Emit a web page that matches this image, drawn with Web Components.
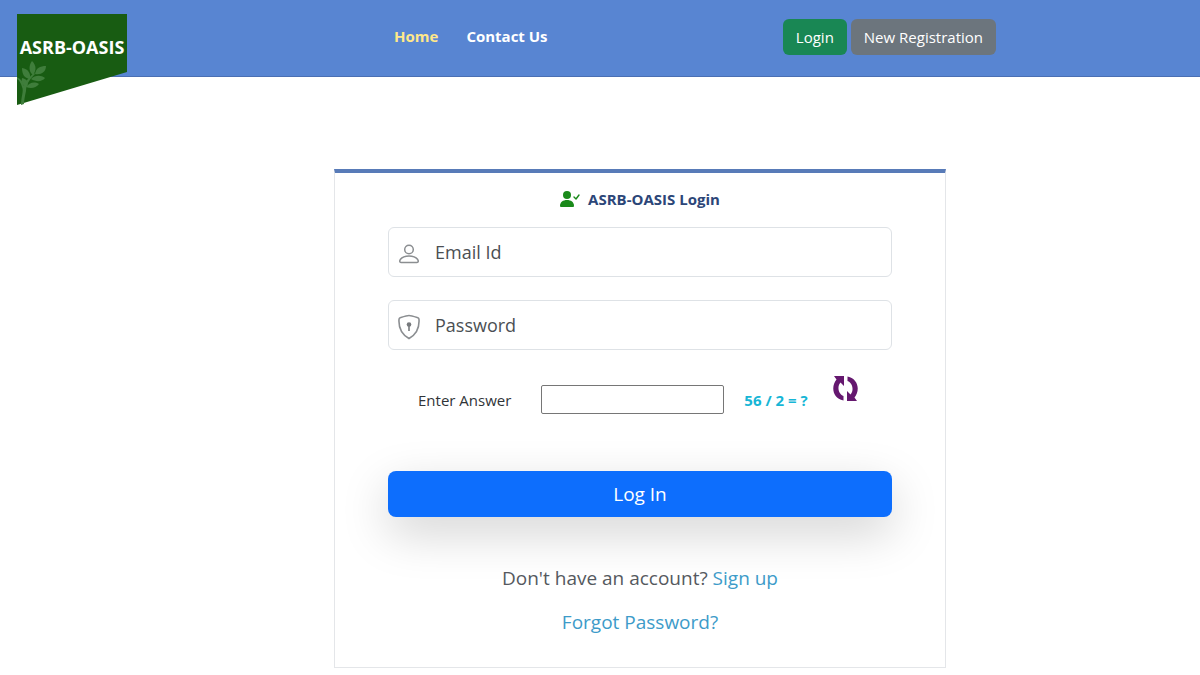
<!DOCTYPE html>
<html lang="en">
<head>
<meta charset="utf-8">
<meta name="viewport" content="width=device-width, initial-scale=1">
<title>ASRB-OASIS Login</title>
<style>
    body {
        margin: 0;
        background: #fff;
        color: #303438;
        font: 15px/24px "Open Sans", "Noto Sans", sans-serif;
    }
    site-header [slot="nav"] { color: #fff; font-weight: 700; text-decoration: none; }
    site-header [slot="nav"][aria-current] { color: #ffe88a; }
</style>
</head>
<body>
<site-header>
    <a slot="nav" href="#home" aria-current="page">Home</a>
    <a slot="nav" href="#contact">Contact Us</a>
    <action-button slot="actions" color="#198754">Login</action-button>
    <action-button slot="actions" color="#6c757d">New Registration</action-button>
</site-header>
<login-card heading="ASRB-OASIS Login"></login-card>

<script>
// logo banner hanging below the header
class SiteLogo extends HTMLElement {
    constructor() {
        super();
        this.attachShadow({ mode: 'open' });
        this.shadowRoot.innerHTML = `
            <style>
                :host { display: block; }
                a, svg { display: block; }
                text { font: 700 18px "Open Sans", "Noto Sans", sans-serif; }
            </style>
            <a href="#home" aria-label="ASRB-OASIS">
                <svg width="110" height="91" viewBox="0 0 110 91">
                    <path d="M0 0H110V58L0 91Z" fill="#185c12"/>
                    <g fill="#3f7d3b">
                        <path d="M4 91C4 82 7 77 5 73C4 69 2 66 0 65V63C4 65 6 68 7 72C8 68 12 63 17 59L18 60C12 66 9 71 9 77C8 82 7 86 7 90Z"/>
                        <path d="M15 47C20 52 19 57 16 61C11 57 12 51 15 47Z"/>
                        <path d="M29 52C29 58 24 61 18 60C19 54 23 52 29 52Z"/>
                        <path d="M5 54C11 55 14 59 13 65C7 64 5 60 5 54Z"/>
                        <path d="M28 64C25 68 19 68 14 65C18 61 24 61 28 64Z"/>
                        <path d="M5 64C10 65 12 68 10 73C6 72 4 69 5 64Z"/>
                        <path d="M22 70C19 74 14 75 9 73C12 69 17 67 22 70Z"/>
                    </g>
                    <text x="55" y="40" text-anchor="middle" fill="#fff">ASRB-OASIS</text>
                </svg>
            </a>
        `;
    }
}

class ActionButton extends HTMLElement {
    constructor() {
        super();
        this.attachShadow({ mode: 'open' });
    }

    connectedCallback() {
        this.shadowRoot.innerHTML = `
            <style>
                :host { display: block; }
                button {
                    display: block;
                    padding: 6px 13px;
                    border: 0;
                    border-radius: 6px;
                    background: ${this.getAttribute('color')};
                    color: #fff;
                    font: inherit;
                    cursor: pointer;
                }
            </style>
            <button type="button"><slot></slot></button>
        `;
    }
}

class SiteHeader extends HTMLElement {
    constructor() {
        super();
        this.attachShadow({ mode: 'open' });
        this.shadowRoot.innerHTML = `
            <style>
                :host { display: block; }
                header {
                    display: grid;
                    grid-template-columns: 35fr 36fr auto;
                    align-items: start;
                    padding: 14px 17% 21px 16px;
                    border-bottom: 1px solid #4a6fb3;
                    background: #5885d2;
                }
                site-logo { margin: 0 0 -64px 1px; }
                nav { display: flex; gap: 28px; padding-top: 10px; }
                .actions { display: flex; gap: 4px; padding-top: 5px; }
            </style>
            <header>
                <site-logo></site-logo>
                <nav aria-label="Main"><slot name="nav"></slot></nav>
                <div class="actions"><slot name="actions"></slot></div>
            </header>
        `;
    }
}

// text box with an icon at its left edge
class IconField extends HTMLElement {
    constructor() {
        super();
        this.attachShadow({ mode: 'open' });
    }

    connectedCallback() {
        const label = this.getAttribute('label');
        const type = this.getAttribute('type') || 'text';
        this.shadowRoot.innerHTML = `
            <style>
                :host { display: block; }
                label {
                    display: flex;
                    align-items: center;
                    gap: 14px;
                    height: 48px;
                    padding-left: 9px;
                    border: 1px solid #dee2e6;
                    border-radius: 6px;
                }
                ::slotted(svg) { flex: none; margin-top: 4px; }
                input {
                    flex: 1;
                    min-width: 0;
                    padding: 0;
                    border: 0;
                    outline: 0;
                    background: none;
                    color: #212529;
                    font: 18px/28px "Open Sans", "Noto Sans", sans-serif;
                }
                input::placeholder { color: #4b4f53; opacity: 1; }
            </style>
            <label><slot></slot><input type="${type}" placeholder="${label}" aria-label="${label}"></label>
        `;
    }
}

class CaptchaRow extends HTMLElement {
    constructor() {
        super();
        this.attachShadow({ mode: 'open' });
        this.shadowRoot.innerHTML = `
            <style>
                :host { display: flex; align-items: center; padding-left: 30px; }
                input {
                    box-sizing: border-box;
                    width: 183px;
                    height: 29px;
                    margin: 0 20px 0 30px;
                    border: 1px solid #767676;
                    border-radius: 2px;
                    font: inherit;
                }
                strong { color: #17b6d6; }
                button {
                    margin: 0 0 22px 25px;
                    padding: 0;
                    border: 0;
                    background: none;
                    cursor: pointer;
                }
                svg { display: block; }
            </style>
            <label for="answer">Enter Answer</label>
            <input id="answer" type="text">
            <strong>56 / 2 = ?</strong>
            <button type="button" aria-label="New question">
                <svg width="25" height="25" viewBox="0 0 25 25" fill="#65186f">
                    <path d="M1 0H11V10L7.500 6.500C4 10 5 18 10.500 20V24.500C-1 22-2 10 3.500 3.500Z"/>
                    <path d="M24 25H14V15L17.500 18.500C21 15 20 7 14.500 5V.5C26 3 27 15 21.500 21.500Z"/>
                </svg>
            </button>
        `;
    }
}

class LoginCard extends HTMLElement {
    constructor() {
        super();
        this.attachShadow({ mode: 'open' });
    }

    connectedCallback() {
        this.shadowRoot.innerHTML = `
            <style>
                :host { display: block; padding: 92px 0 8px 80px; }
                main {
                    box-sizing: border-box;
                    max-width: 612px;
                    margin: 0 auto;
                    padding: 14px 53px 30px;
                    border: 1px solid #e4e6e9;
                    border-top: 4px solid #587bb8;
                }
                h1 {
                    display: flex;
                    justify-content: center;
                    align-items: center;
                    gap: 8px;
                    margin: 0 0 16px;
                    color: #2c4678;
                    font-size: 15px;
                    line-height: 24px;
                }
                icon-field { margin-bottom: 23px; }
                captcha-row { padding-top: 3px; margin-bottom: 48px; }
                .submit {
                    display: block;
                    width: 100%;
                    padding: 8px;
                    border: 0;
                    border-radius: 8px;
                    background: #0d6efd;
                    box-shadow: 0 16px 48px rgba(0, 0, 0, .175);
                    color: #fff;
                    font: 19px/30px "Open Sans", "Noto Sans", sans-serif;
                    cursor: pointer;
                }
                .links { margin-top: 46px; text-align: center; color: #55595e; font-size: 19px; line-height: 30px; }
                p { margin: 0 0 14px; }
                p:last-child { margin: 0; }
                a { color: #3d9bc9; text-decoration: none; }
            </style>
            <main>
                <form>
                    <h1>
                        <svg width="20" height="16" viewBox="0 0 20 16" aria-hidden="true">
                            <circle cx="7" cy="4" r="4" fill="#1a8a1a"/>
                            <path d="M0 15C0 11 3 9 7 9S14 11 14 15Q14 16 13 16H1Q0 16 0 15Z" fill="#1a8a1a"/>
                            <path d="M14 6L16 8L19 4" fill="none" stroke="#1a8a1a" stroke-width="1.4" stroke-linecap="round" stroke-linejoin="round"/>
                        </svg>
                        ${this.getAttribute('heading')}
                    </h1>
                    <icon-field label="Email Id" type="email">
                        <svg width="23" height="24" viewBox="0 0 23 24" fill="none" stroke="#8b8e91" stroke-width="1.5">
                            <circle cx="11" cy="7.5" r="4.3"/>
                            <path d="M3 20.5C0 20.5 2 14 11 14S22 20.5 19 20.5Z"/>
                        </svg>
                    </icon-field>
                    <icon-field label="Password" type="password">
                        <svg width="23" height="26" viewBox="0 0 23 26" fill="none" stroke="#8b8e91" stroke-width="1.6">
                            <path d="M11 1.500C9 1.500 5 2.800 2.100 3.700Q1 4.100 1 5.500C.5 14 4 20.500 11 24.500C18 20.500 21.500 14 21 5.500Q21 4.100 19.900 3.700C17 2.800 13 1.500 11 1.500Z"/>
                            <circle cx="11" cy="10.500" r="2.300" fill="#777a7d" stroke="none"/>
                            <path d="M11 11V17" stroke="#777a7d"/>
                        </svg>
                    </icon-field>
                    <captcha-row></captcha-row>
                    <button class="submit" type="submit">Log In</button>
                </form>
                <div class="links">
                    <p>Don't have an account? <a href="#signup">Sign up</a></p>
                    <p><a href="#forgot">Forgot Password?</a></p>
                </div>
            </main>
        `;
    }
}

customElements.define('site-logo', SiteLogo);
customElements.define('action-button', ActionButton);
customElements.define('site-header', SiteHeader);
customElements.define('icon-field', IconField);
customElements.define('captcha-row', CaptchaRow);
customElements.define('login-card', LoginCard);
</script>
</body>
</html>
